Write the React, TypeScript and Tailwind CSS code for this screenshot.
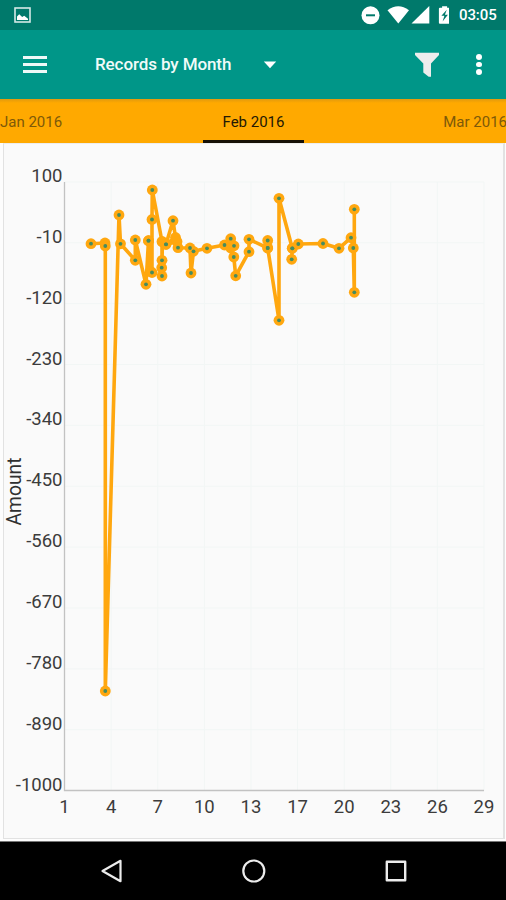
const AXIS_LEFT = 64.5;
const AXIS_RIGHT = 484;
const AXIS_TOP = 182;
const AXIS_BOTTOM = 790.5;

const yLabels = [100, -10, -120, -230, -340, -450, -560, -670, -780, -890, -1000];
const xLabels = [1, 4, 7, 10, 13, 17, 20, 23, 26, 29];

// Record positions in chart space, in drawing order
const points: [number, number][] = [
    [91, 243.7], [105, 243], [105.3, 246], [105.3, 691], [119, 215], [120.5, 243.8],
    [135.3, 260.3], [135.3, 240], [146, 284.3], [148.5, 240.7], [150.5, 271.5], [148.5, 240.7], [152, 272.5], [152, 219.5],
    [152.3, 190], [162, 241.5], [162, 276], [161.7, 267.7], [162, 260.3], [162.5, 242], [166, 244.3], [173, 220.7],
    [175.5, 237.5], [166, 244.3], [177, 241.5], [178, 247.7], [190, 248], [191, 273], [193.5, 251.3], [207, 248.3],
    [224.5, 245], [230.7, 238.7], [234, 245.8], [230.7, 248], [233.8, 257], [235.7, 275.8], [249, 251.7],
    [249, 239.3], [267.7, 248], [267.7, 240.5], [267.7, 248], [279, 320.3], [279, 198.3],
    [292.3, 248.3], [291.7, 259.3], [292.3, 248.3], [298.3, 244], [323, 243.5], [339, 248.3],
    [351, 237.7], [353.3, 248], [354.3, 292.3], [354.3, 209.3],
];

function StatusBar() {
    return (
        <div className="flex h-[30px] shrink-0 items-center bg-[#00796b] pl-[14px] pr-[9px]">
            <svg width="17" height="16" viewBox="0 0 17 16">
                <rect x="1" y="1" width="15" height="14" fill="none" stroke="#d5e9e6" strokeWidth="1.6" />
                <path d="M3 13V9.5l2.2-2.2 3 2.6 2-1.2 3.8 3V13z" fill="#fff" />
            </svg>
            <div className="ml-auto flex items-center">
                <svg width="88" height="20" viewBox="0 0 88 20" fill="#fff">
                    <circle cx="9.5" cy="10.3" r="9" />
                    <path d="M5 10.3h9" stroke="#00796b" strokeWidth="2" />
                    <path d="M26.5 5.3Q37.3-2.7 48 5.3L37.3 18.5z" />
                    <path d="M68.3 1v17.5H50.5z" />
                    <g transform="translate(1.6 0)">
                        <path d="M79.5 1.2h5v1.6h2.2q1 0 1 1v14q0 1-1 1h-9.4q-1 0-1-1v-14q0-1 1-1h2.2z" />
                        <path d="M84.2 4.8l-5.4 6h3l-1.8 5.6 5.3-6.7h-3z" fill="#00796b" />
                    </g>
                </svg>
                <span className="ml-[10px] w-[38px] whitespace-nowrap text-[15px] font-medium leading-none tracking-[-0.1px] text-white">03:05</span>
            </div>
        </div>
    );
}

function AppBar() {
    return (
        <header className="flex h-[69px] shrink-0 items-center bg-[#009688] pl-[23px] pr-[24px]">
            <button aria-label="Menu" className="flex w-6 flex-col gap-[4px]">
                <span className="h-[3.3px] w-full bg-[#eef9f8]" />
                <span className="h-[3.3px] w-full bg-[#eef9f8]" />
                <span className="h-[3.3px] w-full bg-[#eef9f8]" />
            </button>
            <div className="ml-12 flex items-center">
                <span className="w-[168px] whitespace-nowrap text-[17px] font-medium tracking-[-0.1px] text-[#f1fbf9]">Records by Month</span>
                <svg width="14" height="8" viewBox="0 0 14 8" fill="#fff">
                    <path d="M.8.6h12.4L7 7.2z" />
                </svg>
            </div>
            <button aria-label="Filter" className="ml-auto">
                <svg width="26" height="26" viewBox="0 0 26 26" fill="#ededed">
                    <path d="M1 .7h24v2.3l-8 8.6v13.2h-2.3l-5.4-4.3v-8.9L1 3z" />
                </svg>
            </button>
            <button aria-label="More options" className="ml-[36px] flex flex-col items-center gap-[1.8px]">
                <span className="h-[5.8px] w-[5.8px] rounded-full bg-white" />
                <span className="h-[5.8px] w-[5.8px] rounded-full bg-white" />
                <span className="h-[5.8px] w-[5.8px] rounded-full bg-white" />
            </button>
        </header>
    );
}

function MonthTabs() {
    return (
        <nav className="grid h-[44px] shrink-0 grid-cols-[1fr_101px_1fr] bg-linear-to-b from-[#e29a0c] to-[#ffa900] to-[4px] pl-px text-[15px] leading-[46px]">
            <span className="-ml-px whitespace-nowrap text-[#7d5909]">Jan 2016</span>
            <span className="h-[44px] whitespace-nowrap border-b-[3px] border-[#161006] text-center text-[#241905]">Feb 2016</span>
            <span className="-mr-px whitespace-nowrap text-right text-[#7d5909]">Mar 2016</span>
        </nav>
    );
}

function RecordsChart() {
    const stepX = (AXIS_RIGHT - AXIS_LEFT) / (xLabels.length - 1);
    const stepY = (AXIS_BOTTOM - AXIS_TOP) / (yLabels.length - 1);

    return (
        <svg width="500" height="696" viewBox="4 144 500 696" className="block" fontFamily="Roboto, sans-serif">
            {xLabels.map((label, i) => {
                const x = AXIS_LEFT + i * stepX;
                return (
                    <g key={label}>
                        <line x1={x} x2={x} y1={AXIS_TOP} y2={AXIS_BOTTOM} stroke="#f2f6f5" />
                        <text x={x} y="812.5" textAnchor="middle" fontSize="18.5" fill="#3c3c3c">{label}</text>
                    </g>
                );
            })}
            {yLabels.map((label, i) => {
                const y = AXIS_TOP + i * stepY;
                return (
                    <g key={label}>
                        <line x1={AXIS_LEFT} x2={AXIS_RIGHT} y1={y} y2={y} stroke="#f2f6f5" />
                        <text x="62.5" y={y} textAnchor="end" fontSize="18.5" fill="#3c3c3c">{label}</text>
                    </g>
                );
            })}
            <path d={`M${AXIS_LEFT} ${AXIS_TOP}V${AXIS_BOTTOM}H${AXIS_RIGHT}`} fill="none" stroke="#c2c2c2" strokeWidth="1.3" />
            <text transform="translate(20.5 491.5) rotate(-90)" textAnchor="middle" fontSize="19.3" fill="#303030">Amount</text>

            <polyline points={points.map((p) => p.join(",")).join(" ")} fill="none" stroke="#ffa70f" strokeWidth="3.6" strokeLinejoin="round" />
            {points.map(([x, y], i) => (
                <g key={i}>
                    <circle cx={x} cy={y} r="5.4" fill="#ffa70f" />
                </g>
            ))}
            {points
                .filter(([x, y]) => ![150.5, 175.5].includes(x) && ![241.5, 242, 243].includes(y) && !(x === 230.7 && y === 248))
                .map(([x, y], i) => (
                    <circle key={i} cx={x} cy={y} r="1.9" fill="#458c60" />
                ))}
        </svg>
    );
}

function NavigationBar() {
    return (
        <footer className="flex h-[58px] shrink-0 items-center justify-center gap-[117px] bg-black">
            <svg width="25" height="26" viewBox="0 0 25 26" fill="none" stroke="#ececec" strokeWidth="2.2" strokeLinejoin="round">
                <path d="M21.5 2.8v20.4L3.5 13z" />
            </svg>
            <svg width="25" height="26" viewBox="0 0 25 26" fill="none" stroke="#ececec" strokeWidth="2.2">
                <circle cx="12.8" cy="13" r="10.5" />
            </svg>
            <svg width="25" height="26" viewBox="0 0 25 26" fill="none" stroke="#ececec" strokeWidth="2.4" strokeLinejoin="round">
                <rect x="3.8" y="3.8" width="18.4" height="18.4" />
            </svg>
        </footer>
    );
}

export default function App() {
    return (
        <div className="flex h-[900px] w-[506px] flex-col overflow-hidden bg-[#fdfdfd] font-[Roboto,sans-serif]">
            <StatusBar />
            <AppBar />
            <MonthTabs />
            <main className="h-[699px] shrink-0 border-b border-[#777] pb-[2px] pl-[3px] pr-px">
                <div className="h-[696px] overflow-hidden border border-r-2 border-[#e2e2e2] border-t-[#ededed] bg-[#fafafa]">
                    <RecordsChart />
                </div>
            </main>
            <NavigationBar />
        </div>
    );
}
